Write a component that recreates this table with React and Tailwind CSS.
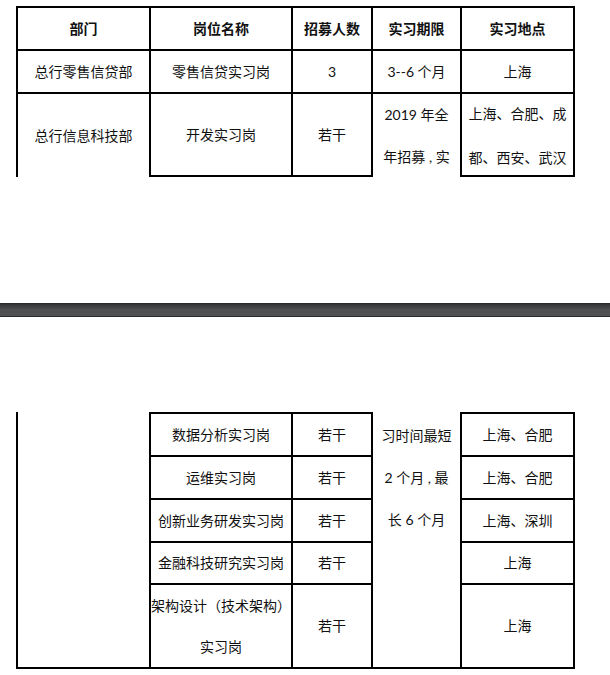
import React from "react";

const cols = "grid grid-cols-[133px_142px_80px_89px_113px]";

const Cell = ({ className = "", children }) => (
  <div
    className={
      "flex flex-col items-center justify-center text-center border-black " +
      className
    }
  >
    {children}
  </div>
);

const TopPage = () => (
  <div className="h-[303px] overflow-hidden bg-white">
    <div
      className={
        cols +
        " grid-rows-[43px_43px_83px] ml-[16px] mt-[6px] w-max border-l-2 border-t-2 border-black"
      }
    >
      <Cell className="border-r-2 border-b-2 font-bold">部门</Cell>
      <Cell className="border-r-2 border-b-2 font-bold">岗位名称</Cell>
      <Cell className="border-r-2 border-b-2 font-bold">招募人数</Cell>
      <Cell className="border-r-2 border-b-2 font-bold">实习期限</Cell>
      <Cell className="border-r-2 border-b-2 font-bold">实习地点</Cell>

      <Cell className="border-r-2 border-b-2">总行零售信贷部</Cell>
      <Cell className="border-r-2 border-b-2">零售信贷实习岗</Cell>
      <Cell className="border-r-2 border-b-2">3</Cell>
      <Cell className="border-r-2 border-b-2">3--6 个月</Cell>
      <Cell className="border-r-2 border-b-2">上海</Cell>

      <Cell className="border-r-2">总行信息科技部</Cell>
      <Cell className="border-r-2 border-b-2">开发实习岗</Cell>
      <Cell className="border-r-2 border-b-2">若干</Cell>
      <Cell className="border-r-2 !justify-start leading-[42px] whitespace-pre">
        <span>2019 年全</span>
        <span>年招募 , 实</span>
      </Cell>
      <Cell className="border-r-2 border-b-2 !justify-start leading-[44px]">
        <span className="-mt-[2px]">上海、合肥、成</span>
        <span>都、西安、武汉</span>
      </Cell>
    </div>
  </div>
);

const PageBreak = () => (
  <div className="h-[14px] border-t border-b border-[#2a2a2a] bg-gradient-to-b from-[#333333] via-[#4f5052] to-[#505153]" />
);

const jobs = [
  ["数据分析实习岗", "若干", "上海、合肥"],
  ["运维实习岗", "若干", "上海、合肥"],
  ["创新业务研发实习岗", "若干", "上海、深圳"],
  ["金融科技研究实习岗", "若干", "上海"],
];

const BottomPage = () => (
  <div className="bg-white pt-[95px] pb-[6px]">
    <div
      className={
        cols +
        " grid-rows-[45px_43px_43px_42px_84px] ml-[16px] w-max border-l-2 border-black"
      }
    >
      <div className="col-start-1 row-start-1 row-span-5 border-r-2 border-b-2 border-black" />
      {jobs.map((j, i) => (
        <React.Fragment key={j[0]}>
          <Cell
            className={
              "col-start-2 border-r-2 border-b-2 " + (i === 0 ? "border-t-2" : "")
            }
          >
            {j[0]}
          </Cell>
          <Cell
            className={
              "col-start-3 border-r-2 border-b-2 " + (i === 0 ? "border-t-2" : "")
            }
          >
            {j[1]}
          </Cell>
          {i === 0 && (
            <Cell className="col-start-4 row-start-1 row-span-5 border-r-2 border-b-2 !justify-start pt-[3px] leading-[42px] whitespace-pre">
              <span>习时间最短</span>
              <span>2 个月 , 最</span>
              <span>长 6 个月</span>
            </Cell>
          )}
          <Cell
            className={
              "col-start-5 border-r-2 border-b-2 " + (i === 0 ? "border-t-2" : "")
            }
          >
            {j[2]}
          </Cell>
        </React.Fragment>
      ))}
      <Cell className="col-start-2 border-r-2 border-b-2 leading-[41px] whitespace-nowrap">
        <span>架构设计（技术架构）</span>
        <span>实习岗</span>
      </Cell>
      <Cell className="col-start-3 border-r-2 border-b-2">若干</Cell>
      <Cell className="col-start-5 border-r-2 border-b-2">上海</Cell>
    </div>
  </div>
);

export default function App() {
  return (
    <div className="w-[610px] min-h-[675px] bg-white text-[14px] leading-[20px] text-[#111] font-[Lato,'Noto_Sans_CJK_SC',sans-serif]">
      <TopPage />
      <PageBreak />
      <BottomPage />
    </div>
  );
}
